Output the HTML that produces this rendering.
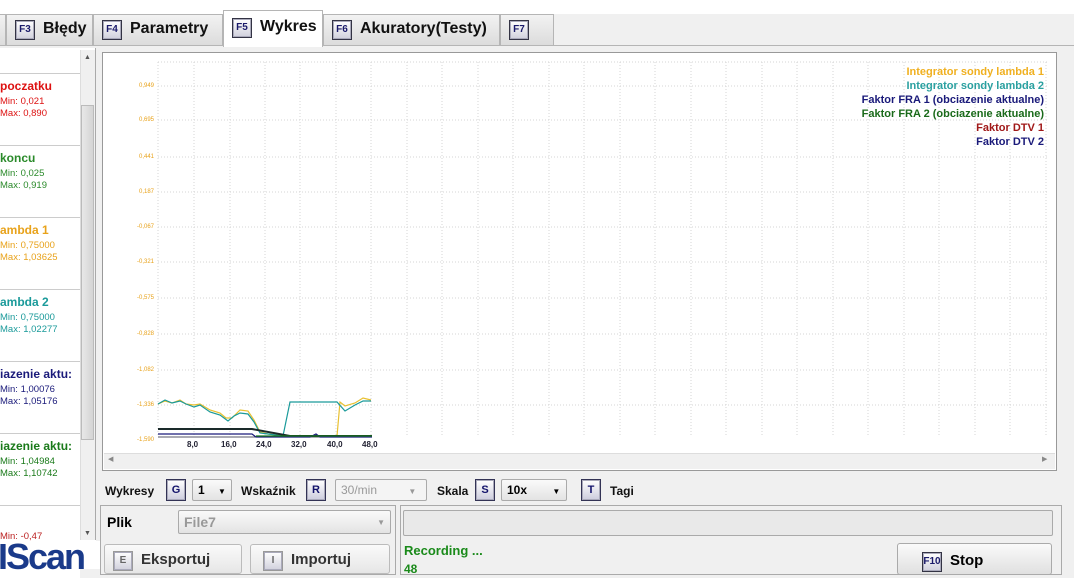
<!DOCTYPE html>
<html><head><meta charset="utf-8"><style>
*{box-sizing:border-box;margin:0;padding:0}
body{width:1074px;height:569px;overflow:hidden;background:#f0f0f0;font-family:"Liberation Sans",sans-serif;position:relative}
.a{position:absolute}
.tab{position:absolute;top:14px;height:31px;background:linear-gradient(#f2f2f2,#dcdcdc);border:1px solid #b5b5b5;border-bottom:none;font-weight:bold;font-size:16px;color:#111;padding:5px 8px 0 8px;white-space:nowrap}
.k{display:inline-block;border:1px solid #334;background:linear-gradient(#fff,#d0d0dc);color:#1a1a6a;font-size:10px;font-weight:bold;width:20px;height:20px;line-height:18px;text-align:center;margin-right:8px;vertical-align:1px;box-shadow:inset 0 0 0 1px #aab}
.item{position:absolute;left:0;width:80px;height:72px;background:#fff;border-bottom:1px solid #ccc;font-size:9.5px;padding:6px 0 0 0;line-height:12px}
.item b{font-size:12px;display:block;margin-bottom:4px;white-space:nowrap}
.yl{position:absolute;left:110px;width:44px;text-align:right;font-size:6px;color:#e8a21a}
.xl{position:absolute;top:440px;font-size:8px;font-weight:bold;color:#223}
.lg{font-size:11px;font-weight:bold;text-align:right;line-height:14px}
.ctl{font-size:12px;font-weight:bold;color:#111}
.kb{display:inline-block;border:1px solid #335;background:linear-gradient(#fff,#ccd);color:#12126a;font-weight:bold;font-size:11px;width:20px;height:22px;line-height:20px;text-align:center;box-shadow:inset 0 0 0 1px #aab}
.sel{position:absolute;height:22px;border:1px solid #aaa;border-radius:2px;background:linear-gradient(#fafafa,#e3e3e3);font-size:12px;font-weight:bold;padding:3px 5px}
</style></head><body>
<div class="a" style="left:0;top:0;width:1074px;height:14px;background:#fff"></div>
<div class="a" style="left:0;top:45px;width:1074px;height:1px;background:#b5b5b5"></div>
<div class="tab" style="left:-2px;width:8px;padding:0"></div>
<div class="tab" style="left:6px;width:87px"><span class="k">F3</span>Błędy</div>
<div class="tab" style="left:93px;width:130px"><span class="k">F4</span>Parametry</div>
<div class="tab" style="left:223px;top:10px;height:37px;width:100px;background:#fff;padding-top:7px"><span class="k">F5</span>Wykres</div>
<div class="tab" style="left:323px;width:177px"><span class="k">F6</span>Akuratory(Testy)</div>
<div class="tab" style="left:500px;width:54px"><span class="k">F7</span></div>

<!-- left list -->
<div class="a" style="left:0;top:48px;width:96px;height:492px;background:#fff;border-right:1px solid #aaa"></div>
<div class="a" style="left:0;top:48px;width:80px;height:26px;border-bottom:1px solid #ccc;background:#fff"></div>
<div class="item" style="top:74px;color:#d11"><b>poczatku</b>Min: 0,021<br>Max: 0,890</div>
<div class="item" style="top:146px;color:#2a8a2a"><b>koncu</b>Min: 0,025<br>Max: 0,919</div>
<div class="item" style="top:218px;color:#e8a21a"><b>ambda 1</b>Min: 0,75000<br>Max: 1,03625</div>
<div class="item" style="top:290px;color:#1a9a9a"><b>ambda 2</b>Min: 0,75000<br>Max: 1,02277</div>
<div class="item" style="top:362px;color:#1a1a7a"><b>iazenie aktu:</b>Min: 1,00076<br>Max: 1,05176</div>
<div class="item" style="top:434px;color:#1a7a1a"><b>iazenie aktu:</b>Min: 1,04984<br>Max: 1,10742</div>
<div class="item" style="top:506px;color:#b22;border:none;padding-top:25px">Min: -0,47</div>
<div class="a" style="left:80px;top:50px;width:15px;height:490px;background:#f0f0f0;border-left:1px solid #ddd"></div>
<div class="a" style="left:81px;top:105px;width:13px;height:335px;background:linear-gradient(90deg,#e8e8e8,#d4d4d4);border:1px solid #bbb"></div>
<div class="a" style="left:84px;top:54px;font-size:7px;color:#555">▲</div>
<div class="a" style="left:84px;top:530px;font-size:7px;color:#555">▼</div>
<div class="a" style="left:80px;top:540px;width:16px;height:29px;background:#fff"></div>
<div class="a" style="left:0;top:541px;width:100px;height:28px;background:#fff"></div>
<div class="a" style="left:-2px;top:539px;font-size:36px;font-weight:bold;color:#1a3a8a;letter-spacing:-2px;line-height:36px">IScan</div>

<!-- chart -->
<div class="a" style="left:102px;top:52px;width:955px;height:419px;background:#fff;border:1px solid #999"></div>
<svg class="a" style="left:0;top:0" width="1074" height="569">
<g stroke="#d6d6d6" stroke-width="1" stroke-dasharray="1,2">
<line x1="158" y1="62" x2="158" y2="437"/>
<line x1="194" y1="62" x2="194" y2="437"/><line x1="230" y1="62" x2="230" y2="437"/><line x1="265" y1="62" x2="265" y2="437"/><line x1="300" y1="62" x2="300" y2="437"/><line x1="336" y1="62" x2="336" y2="437"/><line x1="371" y1="62" x2="371" y2="437"/><line x1="407" y1="62" x2="407" y2="437"/><line x1="442" y1="62" x2="442" y2="437"/><line x1="478" y1="62" x2="478" y2="437"/><line x1="513" y1="62" x2="513" y2="437"/><line x1="549" y1="62" x2="549" y2="437"/><line x1="584" y1="62" x2="584" y2="437"/><line x1="620" y1="62" x2="620" y2="437"/><line x1="655" y1="62" x2="655" y2="437"/><line x1="691" y1="62" x2="691" y2="437"/><line x1="726" y1="62" x2="726" y2="437"/><line x1="762" y1="62" x2="762" y2="437"/><line x1="797" y1="62" x2="797" y2="437"/><line x1="833" y1="62" x2="833" y2="437"/><line x1="868" y1="62" x2="868" y2="437"/><line x1="904" y1="62" x2="904" y2="437"/><line x1="939" y1="62" x2="939" y2="437"/><line x1="975" y1="62" x2="975" y2="437"/><line x1="1010" y1="62" x2="1010" y2="437"/><line x1="1046" y1="62" x2="1046" y2="437"/>
<line x1="158" y1="62" x2="1048" y2="62"/>
<line x1="158" y1="86" x2="1048" y2="86"/><line x1="158" y1="120" x2="1048" y2="120"/><line x1="158" y1="157" x2="1048" y2="157"/><line x1="158" y1="192" x2="1048" y2="192"/><line x1="158" y1="227" x2="1048" y2="227"/><line x1="158" y1="262" x2="1048" y2="262"/><line x1="158" y1="298" x2="1048" y2="298"/><line x1="158" y1="334" x2="1048" y2="334"/><line x1="158" y1="370" x2="1048" y2="370"/><line x1="158" y1="405" x2="1048" y2="405"/>
</g>
<line x1="158" y1="437" x2="372" y2="437" stroke="#556" stroke-width="1"/>
<polyline fill="none" stroke="#e8c030" stroke-width="1.2" points="158,404 165,401 172,403 180,400 186,404 194,405 200,404 210,410 220,413 226,418 232,418 240,410 248,411 254,420 260,432 268,434 290,436 300,436 337,436 340,402 345,406 355,403 363,398 371,400"/>
<polyline fill="none" stroke="#1a9a9a" stroke-width="1.2" points="158,404 165,400 172,403 180,401 186,404 194,407 200,405 210,412 220,415 228,421 234,416 240,413 248,414 254,422 260,433 268,434 283,436 290,402 337,402 345,411 355,405 363,401 371,401"/>
<polyline fill="none" stroke="#1a2a2a" stroke-width="2" points="158,429 252,429 290,436 372,436"/>
<polyline fill="none" stroke="#1a1a7a" stroke-width="1.2" points="158,434 252,434 256,437 310,437 316,434 320,437 372,437"/>
<polyline fill="none" stroke="#1a7a1a" stroke-width="1.2" points="256,436 372,436"/>
</svg>
<div class="yl" style="top:83px">0,949</div><div class="yl" style="top:117px">0,695</div><div class="yl" style="top:154px">0,441</div><div class="yl" style="top:189px">0,187</div><div class="yl" style="top:224px">-0,067</div><div class="yl" style="top:259px">-0,321</div><div class="yl" style="top:295px">-0,575</div><div class="yl" style="top:331px">-0,828</div><div class="yl" style="top:367px">-1,082</div><div class="yl" style="top:402px">-1,336</div><div class="yl" style="top:437px">-1,590</div>
<div class="xl" style="left:187px">8,0</div><div class="xl" style="left:221px">16,0</div><div class="xl" style="left:256px">24,0</div><div class="xl" style="left:291px">32,0</div><div class="xl" style="left:327px">40,0</div><div class="xl" style="left:362px">48,0</div>
<div class="a lg" style="right:30px;top:65px"><div style="color:#f0b020">Integrator sondy lambda 1</div><div style="color:#2aa0a0">Integrator sondy lambda 2</div><div style="color:#1a1a7a">Faktor FRA 1 (obciazenie aktualne)</div><div style="color:#1a6a1a">Faktor FRA 2 (obciazenie aktualne)</div><div style="color:#a01818">Faktor DTV 1</div><div style="color:#1a1a7a">Faktor DTV 2</div></div>
<div class="a" style="left:104px;top:453px;width:951px;height:16px;background:#f0f0f0;border-top:1px solid #ddd"></div>
<div class="a" style="left:108px;top:455px;font-size:7px;color:#888">◀</div>
<div class="a" style="left:1042px;top:455px;font-size:7px;color:#888">▶</div>

<!-- controls -->
<div class="a ctl" style="left:105px;top:484px">Wykresy</div>
<div class="a kb" style="left:166px;top:479px">G</div>
<div class="sel" style="left:192px;top:479px;width:40px">1 <span style="font-size:8px;margin-left:10px">▼</span></div>
<div class="a ctl" style="left:241px;top:484px">Wskaźnik</div>
<div class="a kb" style="left:306px;top:479px">R</div>
<div class="sel" style="left:335px;top:479px;width:92px;color:#999;font-weight:normal;background:#f4f4f4">30/min <span style="font-size:8px;margin-left:28px">▼</span></div>
<div class="a ctl" style="left:437px;top:484px">Skala</div>
<div class="a kb" style="left:475px;top:479px">S</div>
<div class="sel" style="left:501px;top:479px;width:66px">10x <span style="font-size:8px;margin-left:22px">▼</span></div>
<div class="a kb" style="left:581px;top:479px">T</div>
<div class="a ctl" style="left:610px;top:484px">Tagi</div>

<!-- bottom panels -->
<div class="a" style="left:100px;top:505px;width:296px;height:70px;border:1px solid #aaa;background:#f0f0f0"></div>
<div class="a" style="left:107px;top:514px;font-size:14px;font-weight:bold">Plik</div>
<div class="sel" style="left:178px;top:510px;width:213px;height:24px;color:#999;font-size:14px;padding-top:3px">File7<span style="position:absolute;right:5px;top:7px;font-size:8px">▼</span></div>
<div class="a" style="left:104px;top:544px;width:138px;height:30px;border:1px solid #bbb;border-radius:3px;background:linear-gradient(#fafafa,#e6e6e6);font-size:15px;font-weight:bold;color:#333;padding:6px 0 0 8px"><span class="k" style="color:#666;border-color:#999">E</span>Eksportuj</div>
<div class="a" style="left:250px;top:544px;width:140px;height:30px;border:1px solid #bbb;border-radius:3px;background:linear-gradient(#fafafa,#e6e6e6);font-size:15px;font-weight:bold;color:#333;padding:6px 0 0 12px"><span class="k" style="color:#666;border-color:#999">I</span>Importuj</div>
<div class="a" style="left:400px;top:505px;width:662px;height:70px;border:1px solid #aaa;background:#f0f0f0"></div>
<div class="a" style="left:403px;top:510px;width:650px;height:26px;border:1px solid #aaa;border-radius:2px;background:#e9e9e9"></div>
<div class="a" style="left:404px;top:543px;font-size:13px;font-weight:bold;color:#1a8a1a">Recording ...</div>
<div class="a" style="left:404px;top:562px;font-size:12px;font-weight:bold;color:#1a8a1a">48</div>
<div class="a" style="left:897px;top:543px;width:155px;height:32px;border:1px solid #aaa;border-radius:3px;background:linear-gradient(#fafafa,#e0e0e0);font-size:15px;font-weight:bold;padding:8px 0 0 24px"><span class="k">F10</span>Stop</div>
</body></html>
